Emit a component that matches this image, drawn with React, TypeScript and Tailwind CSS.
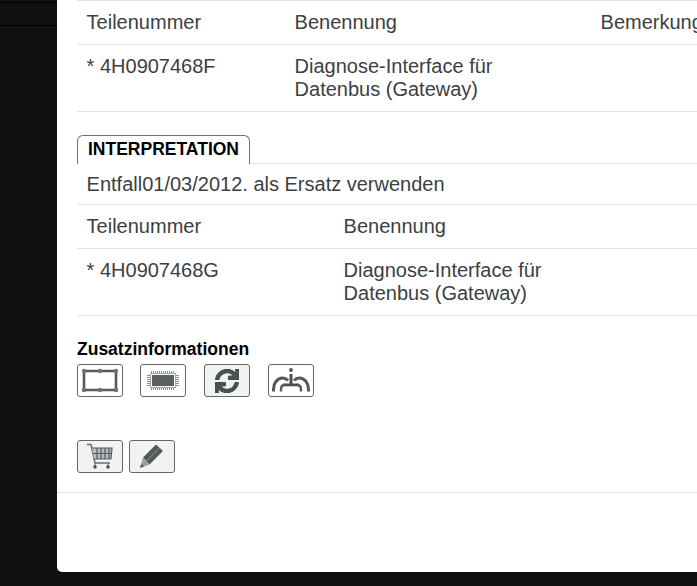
import React from "react";
import { FaSync } from "react-icons/fa";

function IconButton({ shaded, className, children }: { shaded?: boolean; className?: string; children: React.ReactNode }) {
  return (
    <div
      className={`w-[46px] h-[33px] flex items-center justify-center border border-[#63686a] rounded-[3px] text-[#4a5052] ${
        shaded ? "bg-[#f1f2f2]" : "bg-white"
      } ${className ?? ""}`}
    >
      {children}
    </div>
  );
}

// viewBox lines up with the button's own pixels, border included
function Glyph({ children }: { children: React.ReactNode }) {
  return (
    <svg width="44" height="31" viewBox="1 1 44 31" fill="none">
      {children}
    </svg>
  );
}

function FrameIcon() {
  return (
    <Glyph>
      <rect x="7" y="7" width="32" height="19" rx="1" stroke="#555b5d" strokeWidth="2.600" />
      <g fill="#6c7173">
        <circle cx="7" cy="7" r="2.200" />
        <circle cx="39" cy="7" r="2.200" />
        <circle cx="7" cy="26" r="2.200" />
        <circle cx="39" cy="26" r="2.200" />
        <circle cx="23" cy="7" r="2.200" />
        <circle cx="23" cy="26" r="2.200" />
      </g>
    </Glyph>
  );
}

function ChipIcon() {
  const xs = [11.5, 13.5, 15.5, 17.5, 19.5, 21.5, 23.5, 25.5, 27.5, 29.5, 31.5, 33.5];
  const ys = [11.5, 13.5, 15.5, 17.5, 19.5, 21.5];
  return (
    <Glyph>
      {xs.map((x) => (
        <path key={x} d={`M${x} 7V10M${x} 23V26`} stroke="#8a8f90" strokeWidth="1" />
      ))}
      {ys.map((y) => (
        <path key={y} d={`M7 ${y}H10M36 ${y}H39`} stroke="#8a8f90" strokeWidth="1" />
      ))}
      <rect x="10.500" y="9.500" width="25" height="14" fill="#fff" stroke="#a3a7a8" />
      <rect x="12" y="11" width="22" height="11" fill="#5a6062" />
    </Glyph>
  );
}

function GatewayIcon() {
  return (
    <Glyph>
      <circle cx="23" cy="6" r="1.900" fill="#4a5052" />
      <rect x="21.500" y="10" width="3" height="10" fill="#4a5052" />
      <rect x="15.500" y="19.500" width="15" height="2.800" fill="#4a5052" />
      <path d="M5.500 27.500V25C5.500 19 9.500 14 14.500 14C16.500 14 18.500 14.800 20 16.500" stroke="#53595b" strokeWidth="3" />
      <path d="M40.500 27.500V25C40.500 19 36.500 14 31.500 14C29.500 14 27.500 14.800 26 16.500" stroke="#53595b" strokeWidth="3" />
      <path d="M13 27.500V25.500C13 23 14.500 21 17 20.800" stroke="#53595b" strokeWidth="2.400" />
      <path d="M33 27.500V25.500C33 23 31.500 21 29 20.800" stroke="#53595b" strokeWidth="2.400" />
    </Glyph>
  );
}

function CartIcon() {
  return (
    <Glyph>
      <path d="M10 4.500H14L18 23H33" stroke="#6a6f71" strokeWidth="1.500" />
      <path d="M15 8H35L34 19H17Z" fill="#b9bcbd" />
      <g stroke="#565c5e" strokeWidth="1.200">
        <path d="M15 8H35L34 19H17" />
        <path d="M16 13.500H34.500M20 8V19M24 8V19M28 8V19M32 8V19" />
      </g>
      <path d="M18 23V26M31 23V26" stroke="#6a6f71" strokeWidth="1.200" />
      <circle cx="18" cy="27" r="1.800" fill="#4a5052" />
      <circle cx="31" cy="27" r="1.800" fill="#4a5052" />
    </Glyph>
  );
}

function PencilIcon() {
  return (
    <Glyph>
      <path d="M14 17.500L27 4.500L34 11L20.500 24.500Z" fill="#53595b" />
      <path d="M17.500 21L30.500 8" stroke="#8f9495" strokeWidth="1" />
      <path d="M14 17.500L20.500 24.500L11 28Z" fill="#9a9ea0" />
      <path d="M12.500 24L15 26.300L11 28Z" fill="#53595b" />
    </Glyph>
  );
}

function PartsTable({ second, number }: { second: number; number: string }) {
  const cols = second === 208 ? "grid-cols-[208px_306px_200px]" : "grid-cols-[257px_306px_150px]";
  return (
    <div className="w-[620px]">
      <div className={`grid ${cols} h-[44px] items-center border-b border-[#dee2e6]`}>
        <span className="pl-[9.6px]">Teilenummer</span>
        <span className="pl-[9.6px]">Benennung</span>
        {second === 208 && <span className="pl-[9.6px] whitespace-nowrap">Bemerkung</span>}
      </div>
      <div className={`grid ${cols} h-[67px] pt-[10px] border-b border-[#dee2e6]`}>
        <span className="pl-[9.6px]">* {number}</span>
        <span className="pl-[9.6px]">
          Diagnose-Interface für
          <br />
          Datenbus (Gateway)
        </span>
      </div>
    </div>
  );
}

export default function App() {
  return (
    <div
      className="flex w-[697px] h-[586px] overflow-hidden bg-[#111111] text-[20px] leading-[23px] text-[#3b3f42]"
      style={{ fontFamily: '"Liberation Sans", Arial, sans-serif' }}
    >
      <div className="w-[57px] shrink-0">
        <div className="h-[24px] mt-[2px] border-y border-black" />
      </div>
      <div className="w-[640px] h-[572px] shrink-0 bg-white rounded-bl-[5px] overflow-hidden flex flex-col">
        <div className="pl-[20px] flex flex-col">
          <div className="border-t border-[#dee2e6]" />
          <PartsTable second={208} number="4H0907468F" />

          <div className="mt-[23px] w-[173px] h-[29px] -mb-px pb-[2px] border border-b-0 border-[#6c7173] rounded-t-[6px] flex items-center justify-center bg-white z-10">
            <span className="font-bold text-[17.5px] text-black">INTERPRETATION</span>
          </div>
          <div className="w-[620px] h-[42px] border-y border-[#dee2e6] flex items-center pl-[9.6px]">
            Entfall01/03/2012. als Ersatz verwenden
          </div>
          <PartsTable second={257} number="4H0907468G" />

          <div className="mt-[22px] font-bold text-[17.5px] leading-[23px] text-black">
            Zusatzinformationen
          </div>
          <div className="mt-[3px] flex gap-[18px]">
            <IconButton className="-mr-px">
              <FrameIcon />
            </IconButton>
            <IconButton>
              <ChipIcon />
            </IconButton>
            <IconButton shaded>
              <FaSync size={24} stroke="currentColor" strokeWidth={24} />
            </IconButton>
            <IconButton>
              <GatewayIcon />
            </IconButton>
          </div>
          <div className="mt-[43px] flex gap-[6px]">
            <IconButton shaded>
              <CartIcon />
            </IconButton>
            <IconButton shaded>
              <PencilIcon />
            </IconButton>
          </div>
        </div>
        <div className="mt-[19px] border-t border-[#dee2e6]" />
      </div>
    </div>
  );
}
